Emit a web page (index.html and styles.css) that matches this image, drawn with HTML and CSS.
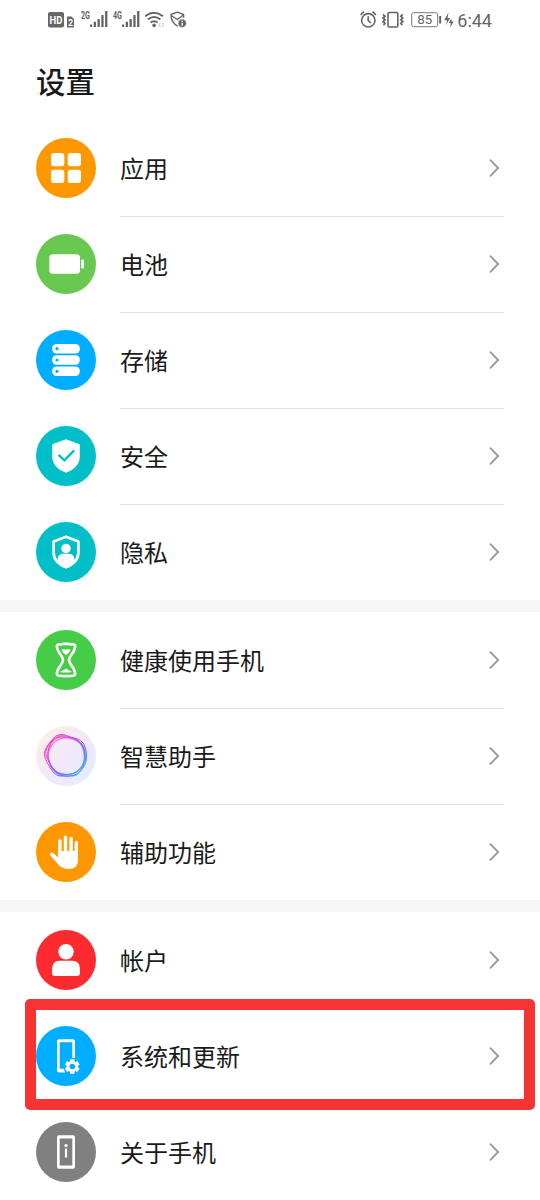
FILE: index.html
```html
<!DOCTYPE html>
<html lang="zh-CN">
  <head>
    <meta charset="UTF-8" />
    <meta name="viewport" content="width=device-width, initial-scale=1.0" />
    <title>设置</title>
    <link rel="stylesheet" href="styles.css">
  </head>
  <body>
    <div class="status-bar">
      <div class="status-group">
        <svg class="hd" width="27" height="20" viewBox="0 0 27 20">
          <rect x="0" y="2" width="16" height="15.500" rx="2" fill="#666" />
          <text x="1.600" y="13.800" font-size="11" font-weight="700" fill="#fff" textLength="12.8" lengthAdjust="spacingAndGlyphs">HD</text>
          <path d="M19 6.500h4.500l2.500 2.500v8.500h-7z" fill="#666" />
          <text x="20" y="15.600" font-size="9" font-weight="700" fill="#fff">2</text>
        </svg>
        <svg class="signal" width="27" height="20" viewBox="0 0 27 20">
          <text x="0" y="8.8" font-size="10.5" font-weight="700" fill="#666" textLength="9" lengthAdjust="spacingAndGlyphs">2G</text>
          <path d="M9 14.5h2.2V17H9zM12.7 11.8H15V17h-2.3zM16.5 9h2.3v8h-2.3zM20.3 5h2.3v12h-2.3zM24.1 1h2.3v16h-2.3z" fill="#666" />
        </svg>
        <svg class="signal" width="27" height="20" viewBox="0 0 27 20">
          <text x="0" y="8.8" font-size="10.5" font-weight="700" fill="#666" textLength="9" lengthAdjust="spacingAndGlyphs">4G</text>
          <path d="M9 14.5h2.2V17H9zM12.7 11.8H15V17h-2.3zM16.5 9h2.3v8h-2.3zM20.3 5h2.3v12h-2.3zM24.1 1h2.3v16h-2.3z" fill="#666" />
        </svg>
        <svg class="wifi" width="20" height="20" viewBox="0 0 20 20">
          <g fill="none" stroke="#666" stroke-width="1.9">
            <path d="M.2 6.2q8.900-7 17.800 0" />
            <path d="M2.800 9.500q6.300-5 12.600 0" />
            <path d="M5.500 12.600q3.600-2.800 7.200 0" />
          </g>
          <circle cx="9.100" cy="15.400" r="1.800" fill="#666" />
          <path d="M15 13l-1.5 3h2.5M18 17v-4l-1.2 1.5" fill="none" stroke="#ccc" stroke-width="1" />
        </svg>
        <svg width="17" height="20" viewBox="0 0 17 20">
          <path d="M7.8 16.2C3.5 14 1 10.500 1 4.500L7.300 2.200l6.300 2.300v3.200M1.300 5.500l6 4 6.200-4.500" fill="none" stroke="#666" stroke-width="1.400" stroke-linejoin="round" />
          <circle cx="12.200" cy="13.300" r="4.200" fill="#666" stroke="#fff" stroke-width=".6" />
          <path d="M12.200 10.800v1.200M12.200 12.800v3" stroke="#fff" stroke-width="1.300" />
        </svg>
      </div>
      <div class="status-group">
        <svg class="alarm" width="17" height="20" viewBox="0 0 17 20">
          <g fill="none" stroke="#666" stroke-width="1.6">
            <circle cx="8.3" cy="10.3" r="6.7" />
            <path d="M8.200 6.300v4.300l2.700 2.200M.6 4.900l3.400-3.300M12.600 1.600l3.400 3.300" />
          </g>
        </svg>
        <svg class="vibrate" width="22" height="20" viewBox="0 0 22 20">
          <g fill="none" stroke="#666">
            <rect x="6" y="2.500" width="9.800" height="14.500" rx="1.200" stroke-width="1.600" />
            <path d="M1 4.500l2 1.700-2 1.800 2 1.800-2 1.800 2 1.800-1.500 1.800M20.800 4.500l-2 1.700 2 1.800-2 1.800 2 1.800-2 1.800 1.500 1.800" stroke-width="1.700" />
          </g>
        </svg>
        <svg class="power" width="43" height="20" viewBox="0 0 43 20">
          <rect x=".7" y="2.700" width="26" height="14" rx="2" fill="none" stroke="#777" stroke-width="1" />
          <text x="6.200" y="14.300" font-size="13" fill="#666" textLength="15" lengthAdjust="spacingAndGlyphs">85</text>
          <path d="M28.200 6h2v7.500h-2z" fill="#666" />
          <path d="M37.500 2.500l-4.300 7.700h2.800l-1 4.800 4-7h-2.500zM40.500 8l-2.700 5h2l-.5 4.500 3.300-6h-2.100z" fill="#666" />
        </svg>
        <span class="time">6:44</span>
      </div>
    </div>

    <h1>设置</h1>

    <div class="group">
      <div class="row">
        <svg class="icon orange" viewBox="0 0 60 60">
          <g fill="#fff">
            <rect x="15" y="15" width="13.300" height="13.300" rx="2.800" />
            <rect x="31.700" y="15" width="13.300" height="13.300" rx="2.800" />
            <rect x="15" y="31.700" width="13.300" height="13.300" rx="2.800" />
            <rect x="31.700" y="31.700" width="13.300" height="13.300" rx="2.800" />
          </g>
        </svg>
        <div class="cell">
          <span>应用</span>
          <svg class="chevron" viewBox="0 0 12 20"><path d="M1.500 1.500l8.500 8.500-8.500 8.500" /></svg>
        </div>
      </div>
      <div class="row">
        <svg class="icon light-green" viewBox="0 0 60 60">
          <rect x="13.300" y="20.200" width="30.700" height="19.600" rx="3.500" fill="#fff" />
          <rect x="45.200" y="25.500" width="2.800" height="9" rx="1" fill="#fff" />
        </svg>
        <div class="cell">
          <span>电池</span>
          <svg class="chevron" viewBox="0 0 12 20"><path d="M1.500 1.500l8.500 8.500-8.500 8.500" /></svg>
        </div>
      </div>
      <div class="row">
        <svg class="icon blue" viewBox="0 0 60 60">
          <g fill="#fff">
            <rect x="16.200" y="14" width="27.600" height="9.400" rx="4.200" />
            <rect x="16.200" y="25.300" width="27.600" height="9.400" rx="4.200" />
            <rect x="16.200" y="36.600" width="27.600" height="9.400" rx="4.200" />
          </g>
          <g fill="#00aeff">
            <circle cx="21" cy="18.700" r="1.600" />
            <circle cx="21" cy="30" r="1.600" />
            <circle cx="21" cy="41.300" r="1.600" />
          </g>
        </svg>
        <div class="cell">
          <span>存储</span>
          <svg class="chevron" viewBox="0 0 12 20"><path d="M1.500 1.500l8.500 8.500-8.500 8.500" /></svg>
        </div>
      </div>
      <div class="row">
        <svg class="icon teal" viewBox="0 0 60 60">
          <path d="M30 13.200l13 4.900q.8.300.8 1.200v11c0 9-6.300 13.700-13.800 16.500-7.500-2.800-13.800-7.500-13.800-16.500v-11q0-.9.800-1.200z" fill="#fff" />
          <path d="M22.600 28.800l5.800 5.600 9.700-10" fill="none" stroke="#00bfc9" stroke-width="2.300" />
        </svg>
        <div class="cell">
          <span>安全</span>
          <svg class="chevron" viewBox="0 0 12 20"><path d="M1.500 1.500l8.500 8.500-8.500 8.500" /></svg>
        </div>
      </div>
      <div class="row">
        <svg class="icon teal" viewBox="0 0 60 60">
          <path d="M30 14.700l12.400 4.800v11c0 7.600-5.400 12-12.400 14.800-7-2.800-12.400-7.200-12.400-14.800v-11z" fill="none" stroke="#fff" stroke-width="2.700" stroke-linejoin="round" />
          <circle cx="30" cy="26.500" r="4.700" fill="#fff" />
          <path d="M21.500 38c0-4 2.500-6.200 5.500-6.200h6c3 0 5.500 2.200 5.500 6.200-1.500 3-4.500 5.500-8.500 7.200-4-1.700-7-4.200-8.500-7.200z" fill="#fff" />
        </svg>
        <div class="cell">
          <span>隐私</span>
          <svg class="chevron" viewBox="0 0 12 20"><path d="M1.500 1.500l8.500 8.500-8.500 8.500" /></svg>
        </div>
      </div>
    </div>

    <div class="group">
      <div class="row">
        <svg class="icon green" viewBox="0 0 60 60">
          <path d="M22 14.500q8-1.200 16 0 1.300.3 1.200 1.600c-.3 6.900-6.200 9.400-6.200 13.900s5.900 7 6.200 13.900q.1 1.300-1.200 1.600-8 1.200-16 0-1.300-.3-1.200-1.600c.3-6.900 6.200-9.400 6.200-13.900s-5.900-7-6.200-13.900q-.1-1.300 1.200-1.600z" fill="none" stroke="#fff" stroke-width="2.600" />
          <path d="M25.800 19.500q2-1.200 4.200.3 2.200-1.500 4.200-.3.700 1.700-4.200 5.500-4.900-3.800-4.200-5.500zM24 42c1.500-1.500 3.500-1.300 6-3.500 2.500 2.200 4.500 2 6 3.500q-6 1-12 0z" fill="#fff" />
        </svg>
        <div class="cell">
          <span>健康使用手机</span>
          <svg class="chevron" viewBox="0 0 12 20"><path d="M1.500 1.500l8.500 8.500-8.500 8.500" /></svg>
        </div>
      </div>
      <div class="row">
        <svg class="icon assistant" viewBox="0 0 60 60">
          <defs>
            <linearGradient id="ring" x1="12" y1="14" x2="46" y2="48" gradientUnits="userSpaceOnUse">
              <stop offset="0" stop-color="#ff2fb3" />
              <stop offset=".25" stop-color="#e845dc" />
              <stop offset=".6" stop-color="#7a63f2" />
              <stop offset="1" stop-color="#35aaf5" />
            </linearGradient>
          </defs>
          <g fill="none" stroke="url(#ring)">
            <path d="M25 8.500c4-.5 6 2 11 3 6 1 10 3 12 7 2 5 3 9 2.500 14-.5 6-3 9-6 12.500-3 4-5 5-10 5H25c-5 0-7-3-10-7-3-5-6-9-6.500-14-.5-4 2-8 5-12 4-5 7-8 11.500-8.500z" />
            <path d="M23 10.500c4-1.500 9-.5 14 1.500 6 2 10 6 11 12 1 5 2 9 0 14-2 6-6 10-11 11.500-5 1-9 1-14-1-5-3-8-7-10-12-2-4-4-8-3-12 2-6 7-12 13-14z" />
            <path d="M27 11c6 0 11 1 15 4s6 7 6.500 12c.5 6-1 12-4.500 16-4 4-8 5.500-13 5.500s-10-1-13.500-5.500c-3-4-6-9-5.500-14 0-5 1-9 4-13s6-5 11-5z" />
            <path d="M22 9.500c5 0 9 3 15 4 5 2 9 5 10 10s2 9 0 14c-3 6-6 10-12 10.500-5 .5-9 2-14-.5s-7-8-8-13c-2-5-2-9 0-13 2-5 5-12 9-12z" opacity=".6" />
            <path d="M28 12c5-1 10 0 14 3 5 4 8 8 8 14s-3 11-6 14c-5 5-9 6-14 5.500-6 0-10-2-13-6-4-5-5-9-5-14 1-5 3-9 6-12s6-4 10-4.500z" stroke-width="1.400" opacity=".6" />
          </g>
        </svg>
        <div class="cell">
          <span>智慧助手</span>
          <svg class="chevron" viewBox="0 0 12 20"><path d="M1.500 1.500l8.500 8.500-8.500 8.500" /></svg>
        </div>
      </div>
      <div class="row">
        <svg class="icon orange" viewBox="0 0 60 60">
          <g fill="none" stroke="#fff" stroke-width="3.400" stroke-linecap="round">
            <path d="M23.900 18.800V34M29.500 15.200V34M35.100 16.500V34M40.300 20.800V34" />
            <path d="M15.600 32.200l7 7.500" />
          </g>
          <path d="M22.200 29H42v9.500q0 8.500-9.500 8.500-6.500 0-10.200-4.400L14.500 33.500l3-2.200 3.500 3.400q1.200 1 1.200-.8z" fill="#fff" />
        </svg>
        <div class="cell">
          <span>辅助功能</span>
          <svg class="chevron" viewBox="0 0 12 20"><path d="M1.500 1.500l8.500 8.500-8.500 8.500" /></svg>
        </div>
      </div>
    </div>

    <div class="group">
      <div class="row">
        <svg class="icon red" viewBox="0 0 60 60">
          <circle cx="30" cy="21.700" r="7.700" fill="#fff" />
          <path d="M24 30.800h12q7.900 0 7.900 8v4.400q0 2.700-2.700 2.700H18.800q-2.700 0-2.700-2.700v-4.400q0-8 7.900-8z" fill="#fff" />
        </svg>
        <div class="cell">
          <span>帐户</span>
          <svg class="chevron" viewBox="0 0 12 20"><path d="M1.500 1.500l8.500 8.500-8.500 8.500" /></svg>
        </div>
      </div>
      <div class="row highlighted">
        <svg class="icon blue" viewBox="0 0 60 60">
          <path fill-rule="evenodd" d="M23 13.200h14q2 0 2 2V32h-2.700V16.200H23.700v26.600h4.100l1.400 3.700H23q-2 0-2-2V15.200q0-2 2-2z" fill="#fff" />
          <circle cx="36.300" cy="40.500" r="4.300" fill="none" stroke="#fff" stroke-width="3" />
          <path d="M36.300 33.200v3M36.300 44.800v3M30 36.900l2.600 1.500M40 42.600l2.600 1.500M30 44.100l2.600-1.500M40 38.400l2.600-1.500" stroke="#fff" stroke-width="4.400" />
        </svg>
        <div class="cell">
          <span>系统和更新</span>
          <svg class="chevron" viewBox="0 0 12 20"><path d="M1.500 1.500l8.500 8.500-8.500 8.500" /></svg>
        </div>
      </div>
      <div class="row">
        <svg class="icon gray" viewBox="0 0 60 60">
          <path fill-rule="evenodd" d="M23 13.300h14q2 0 2 2v29.400q0 2-2 2H23q-2 0-2-2V15.300q0-2 2-2zM23.700 16.500v27h12.600v-27z" fill="#fff" />
          <circle cx="30" cy="23.500" r="1.600" fill="#fff" />
          <path d="M30 26.500v9" stroke="#fff" stroke-width="2.200" />
        </svg>
        <div class="cell">
          <span>关于手机</span>
          <svg class="chevron" viewBox="0 0 12 20"><path d="M1.500 1.500l8.500 8.500-8.500 8.500" /></svg>
        </div>
      </div>
    </div>
  </body>
</html>
```
FILE: styles.css
```css
* {
    box-sizing: border-box;
}
body {
    margin: 0;
    background-color: #fff;
    color: #1a1a1a;
    font-family: Roboto, "Noto Sans CJK SC", sans-serif;
}
svg {
    display: block;
    flex-shrink: 0;
}
.status-bar {
    display: flex;
    justify-content: space-between;
    height: 40px;
    padding: 0 48px;
}
.status-group {
    display: flex;
    align-items: center;
}
.hd {
    margin-right: 6px;
}
.signal {
    margin-right: 5px;
}
.wifi {
    margin-right: 5px;
}
.alarm {
    margin-right: 5px;
}
.vibrate {
    margin-right: 7px;
}
.power {
    margin-right: 3px;
}
.time {
    color: #666;
    font-size: 18px;
    line-height: 20px;
    padding-top: 1px;
}
h1 {
    height: 80px;
    margin: 0;
    padding: 3px 0 0 36px;
    font-size: 29.5px;
    font-weight: 500;
    line-height: 80px;
}
.group + .group {
    border-top: 12px solid #f6f6f6;
}
.row {
    display: flex;
    align-items: center;
    height: 96px;
    padding: 0 36px;
    position: relative;
}
.icon {
    width: 60px;
    height: 60px;
    margin-right: 24px;
    border-radius: 50%;
}
.orange {
    background-color: #ff9800;
}
.light-green {
    background-color: #69c84f;
}
.blue {
    background-color: #00aeff;
}
.teal {
    background-color: #00bfc9;
}
.green {
    background-color: #47cc47;
}
.red {
    background-color: #fc2b2f;
}
.gray {
    background-color: #808080;
}
.assistant {
    background: linear-gradient(135deg, #fff0df, #f3e8fb 50%, #e0edff);
}
.cell {
    display: flex;
    align-items: center;
    justify-content: space-between;
    flex: 1;
    height: 100%;
    padding-right: 4px;
    font-size: 24px;
}
.cell span {
    padding-bottom: 2px;
}
.row + .row .cell {
    box-shadow: inset 0 1px #e2e2e2;
}
.chevron {
    width: 11px;
    height: 20px;
    fill: none;
    stroke: #999;
    stroke-width: 2;
    stroke-linecap: round;
}
/* red frame drawn over the row and its neighbours */
.highlighted::after {
    content: "";
    position: absolute;
    z-index: 1;
    top: -9px;
    right: 5px;
    bottom: -6px;
    left: 25px;
    border: 11px solid #f73434;
    border-radius: 5px;
}
```
